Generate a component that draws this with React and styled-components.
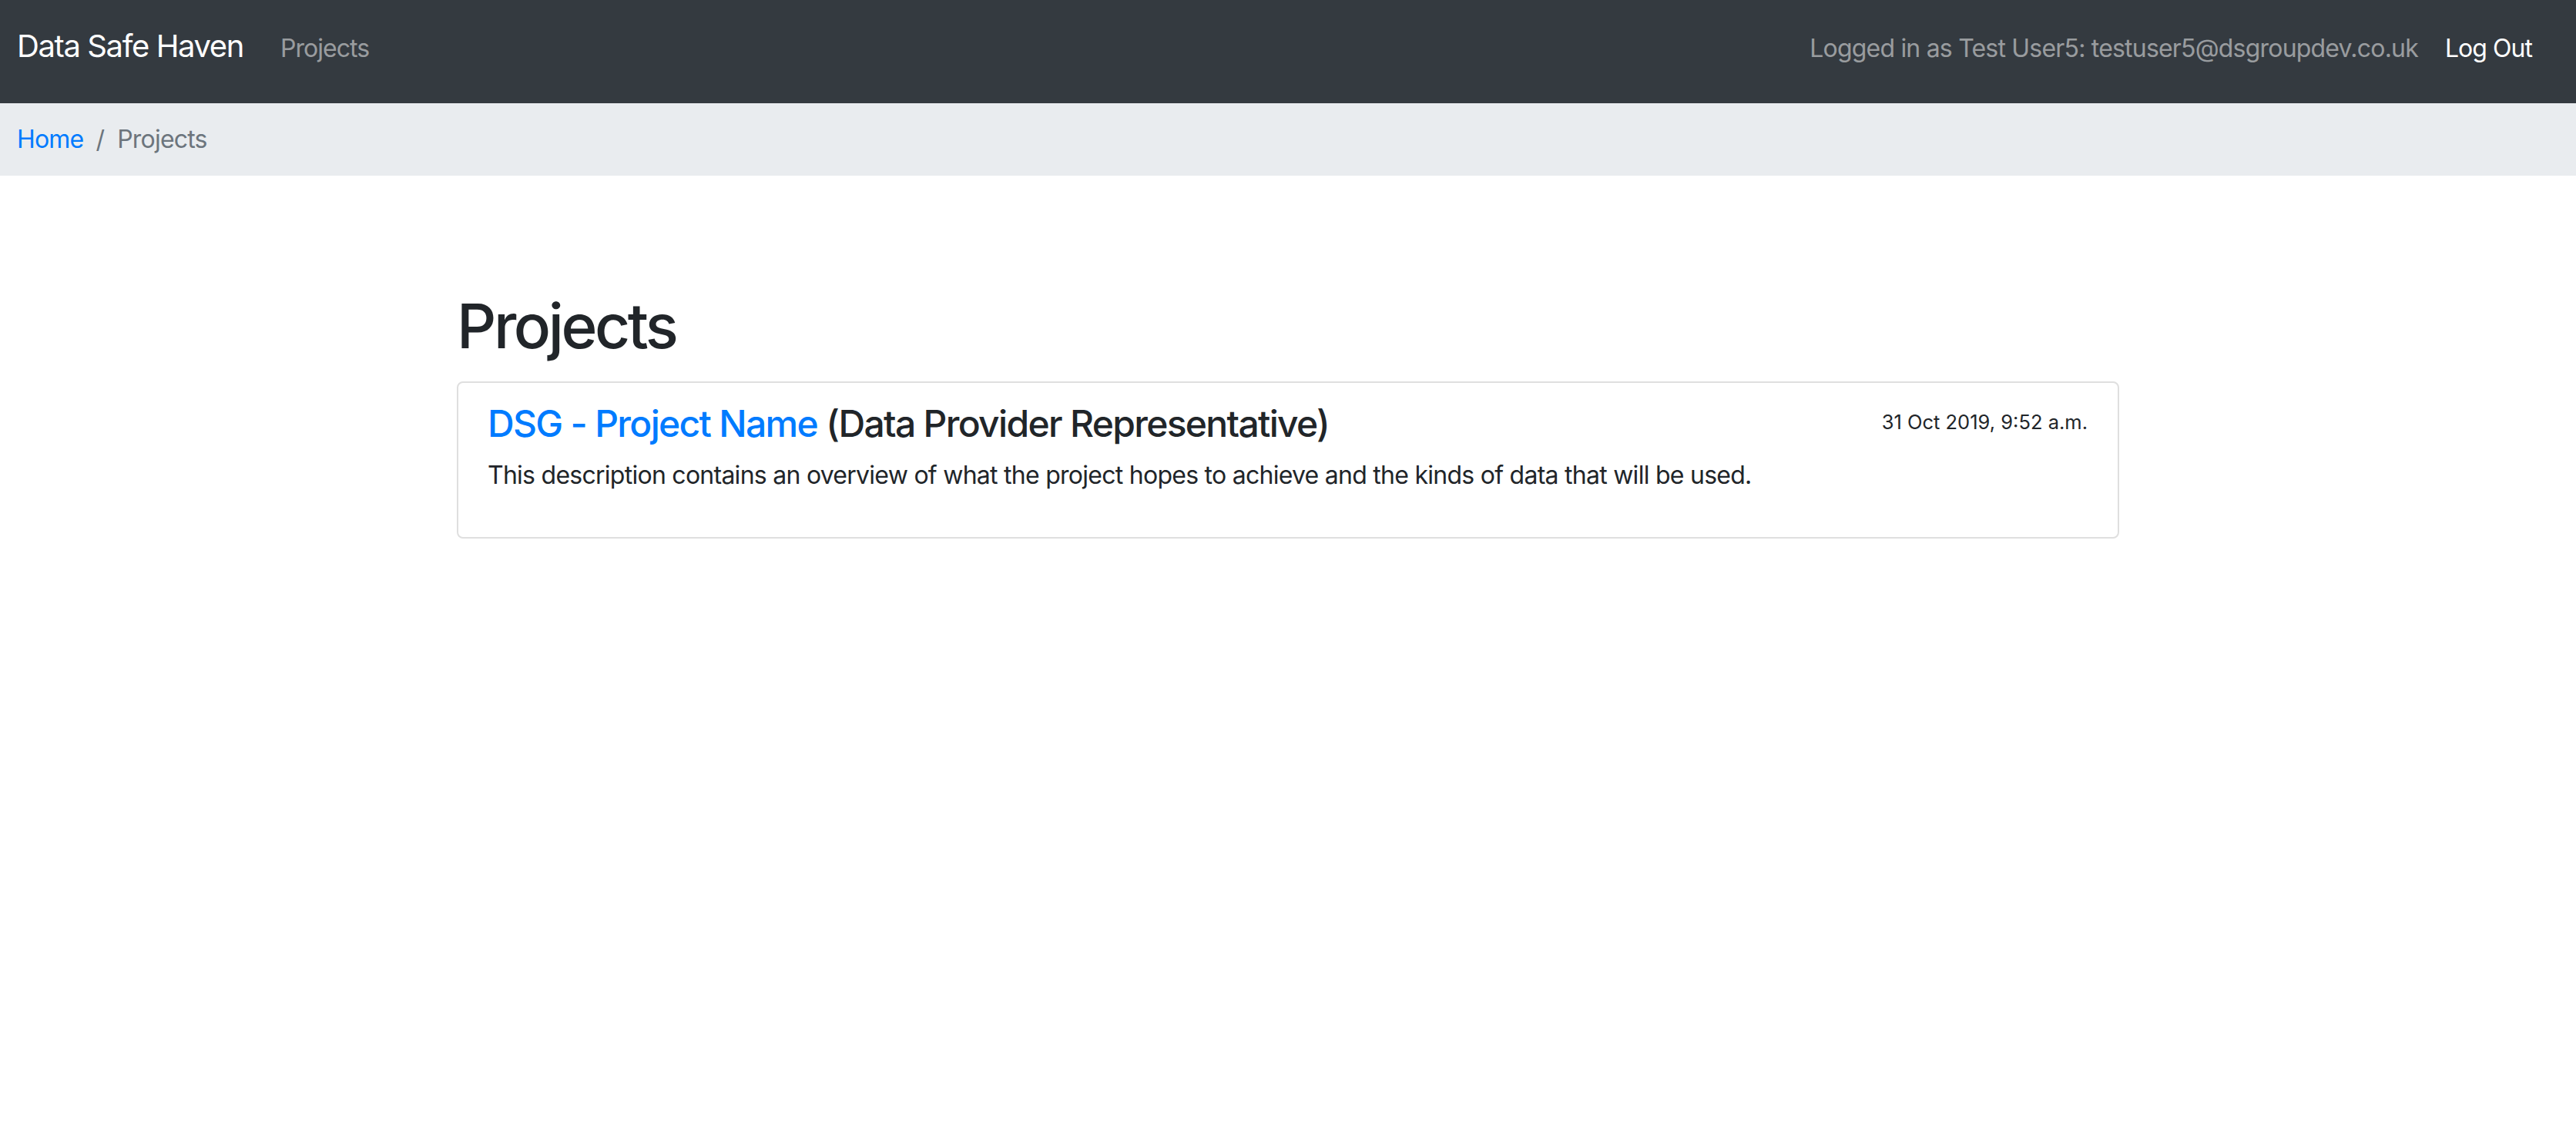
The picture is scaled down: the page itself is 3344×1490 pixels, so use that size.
import React from "react";
import styled, { createGlobalStyle } from "styled-components";

const GlobalStyle = createGlobalStyle`
  html, body {
    margin: 0;
    padding: 0;
    background: #fff;
    font-family: Inter, "Noto Sans", "Liberation Sans", sans-serif;
    color: #212529;
  }
  * { box-sizing: border-box; }
`;

const NavBar = styled.nav`
  height: 134px;
  background-color: #343a40;
  display: flex;
  align-items: baseline;
  padding: 30px 57px 0 22px;
`;

const Brand = styled.a`
  font-size: 40px;
  line-height: 60px;
  letter-spacing: -0.035em;
  color: #fff;
  text-decoration: none;
  margin-right: 48px;
`;

const NavLink = styled.a`
  font-size: 32px;
  line-height: 48px;
  letter-spacing: -0.03em;
  color: ${(p) => (p.$light ? "#fff" : "rgba(255, 255, 255, 0.5)")};
  text-decoration: none;
`;

const NavText = styled.span`
  font-size: 32px;
  line-height: 48px;
  letter-spacing: -0.025em;
  color: rgba(255, 255, 255, 0.5);
  margin-left: auto;
  margin-right: 35px;
`;

const Crumbs = styled.ol`
  list-style: none;
  margin: 0;
  background-color: #e9ecef;
  display: flex;
  padding: 23px 22px;
  font-size: 32px;
  line-height: 48px;
  letter-spacing: -0.025em;
`;

const Crumb = styled.li`
  color: #6c757d;
  & + &::before {
    content: "/";
    color: #6c757d;
    padding: 0 17px 0 16px;
  }
  a {
    color: #007bff;
    text-decoration: none;
  }
`;

const Main = styled.main`
  width: 2158px;
  margin: 0 auto;
  padding-top: 147px;
`;

const Heading = styled.h1`
  font-size: 80px;
  line-height: 96px;
  font-weight: 500;
  letter-spacing: -0.043em;
  margin: 0 0 24px;
`;

const Card = styled.div`
  border: 2px solid #dfdfdf;
  border-radius: 8px;
  padding: 24px 39px 24px 38px;
`;

const CardHead = styled.div`
  display: flex;
  align-items: flex-start;
  justify-content: space-between;
  margin-bottom: 14px;
`;

const Title = styled.h4`
  margin: 0;
  font-size: 48px;
  line-height: 58px;
  font-weight: 500;
  letter-spacing: -0.035em;
  a {
    color: #007bff;
    text-decoration: none;
  }
`;

const Stamp = styled.small`
  font-size: 25.5px;
  line-height: 36px;
  margin-top: 9px;
`;

const Desc = styled.p`
  margin: 0 0 32px;
  font-size: 32px;
  line-height: 48px;
  letter-spacing: -0.023em;
`;

export default function App() {
  return (
    <>
      <GlobalStyle />
      <NavBar>
        <Brand href="#">Data Safe Haven</Brand>
        <NavLink href="#">Projects</NavLink>
        <NavText>Logged in as Test User5: testuser5@dsgroupdev.co.uk</NavText>
        <NavLink href="#" $light>
          Log Out
        </NavLink>
      </NavBar>
      <Crumbs>
        <Crumb>
          <a href="#">Home</a>
        </Crumb>
        <Crumb>Projects</Crumb>
      </Crumbs>
      <Main>
        <Heading>Projects</Heading>
        <Card>
          <CardHead>
            <Title>
              <a href="#">DSG - Project Name</a> (Data Provider Representative)
            </Title>
            <Stamp>31 Oct 2019, 9:52 a.m.</Stamp>
          </CardHead>
          <Desc>
            This description contains an overview of what the project hopes to
            achieve and the kinds of data that will be used.
          </Desc>
        </Card>
      </Main>
    </>
  );
}
